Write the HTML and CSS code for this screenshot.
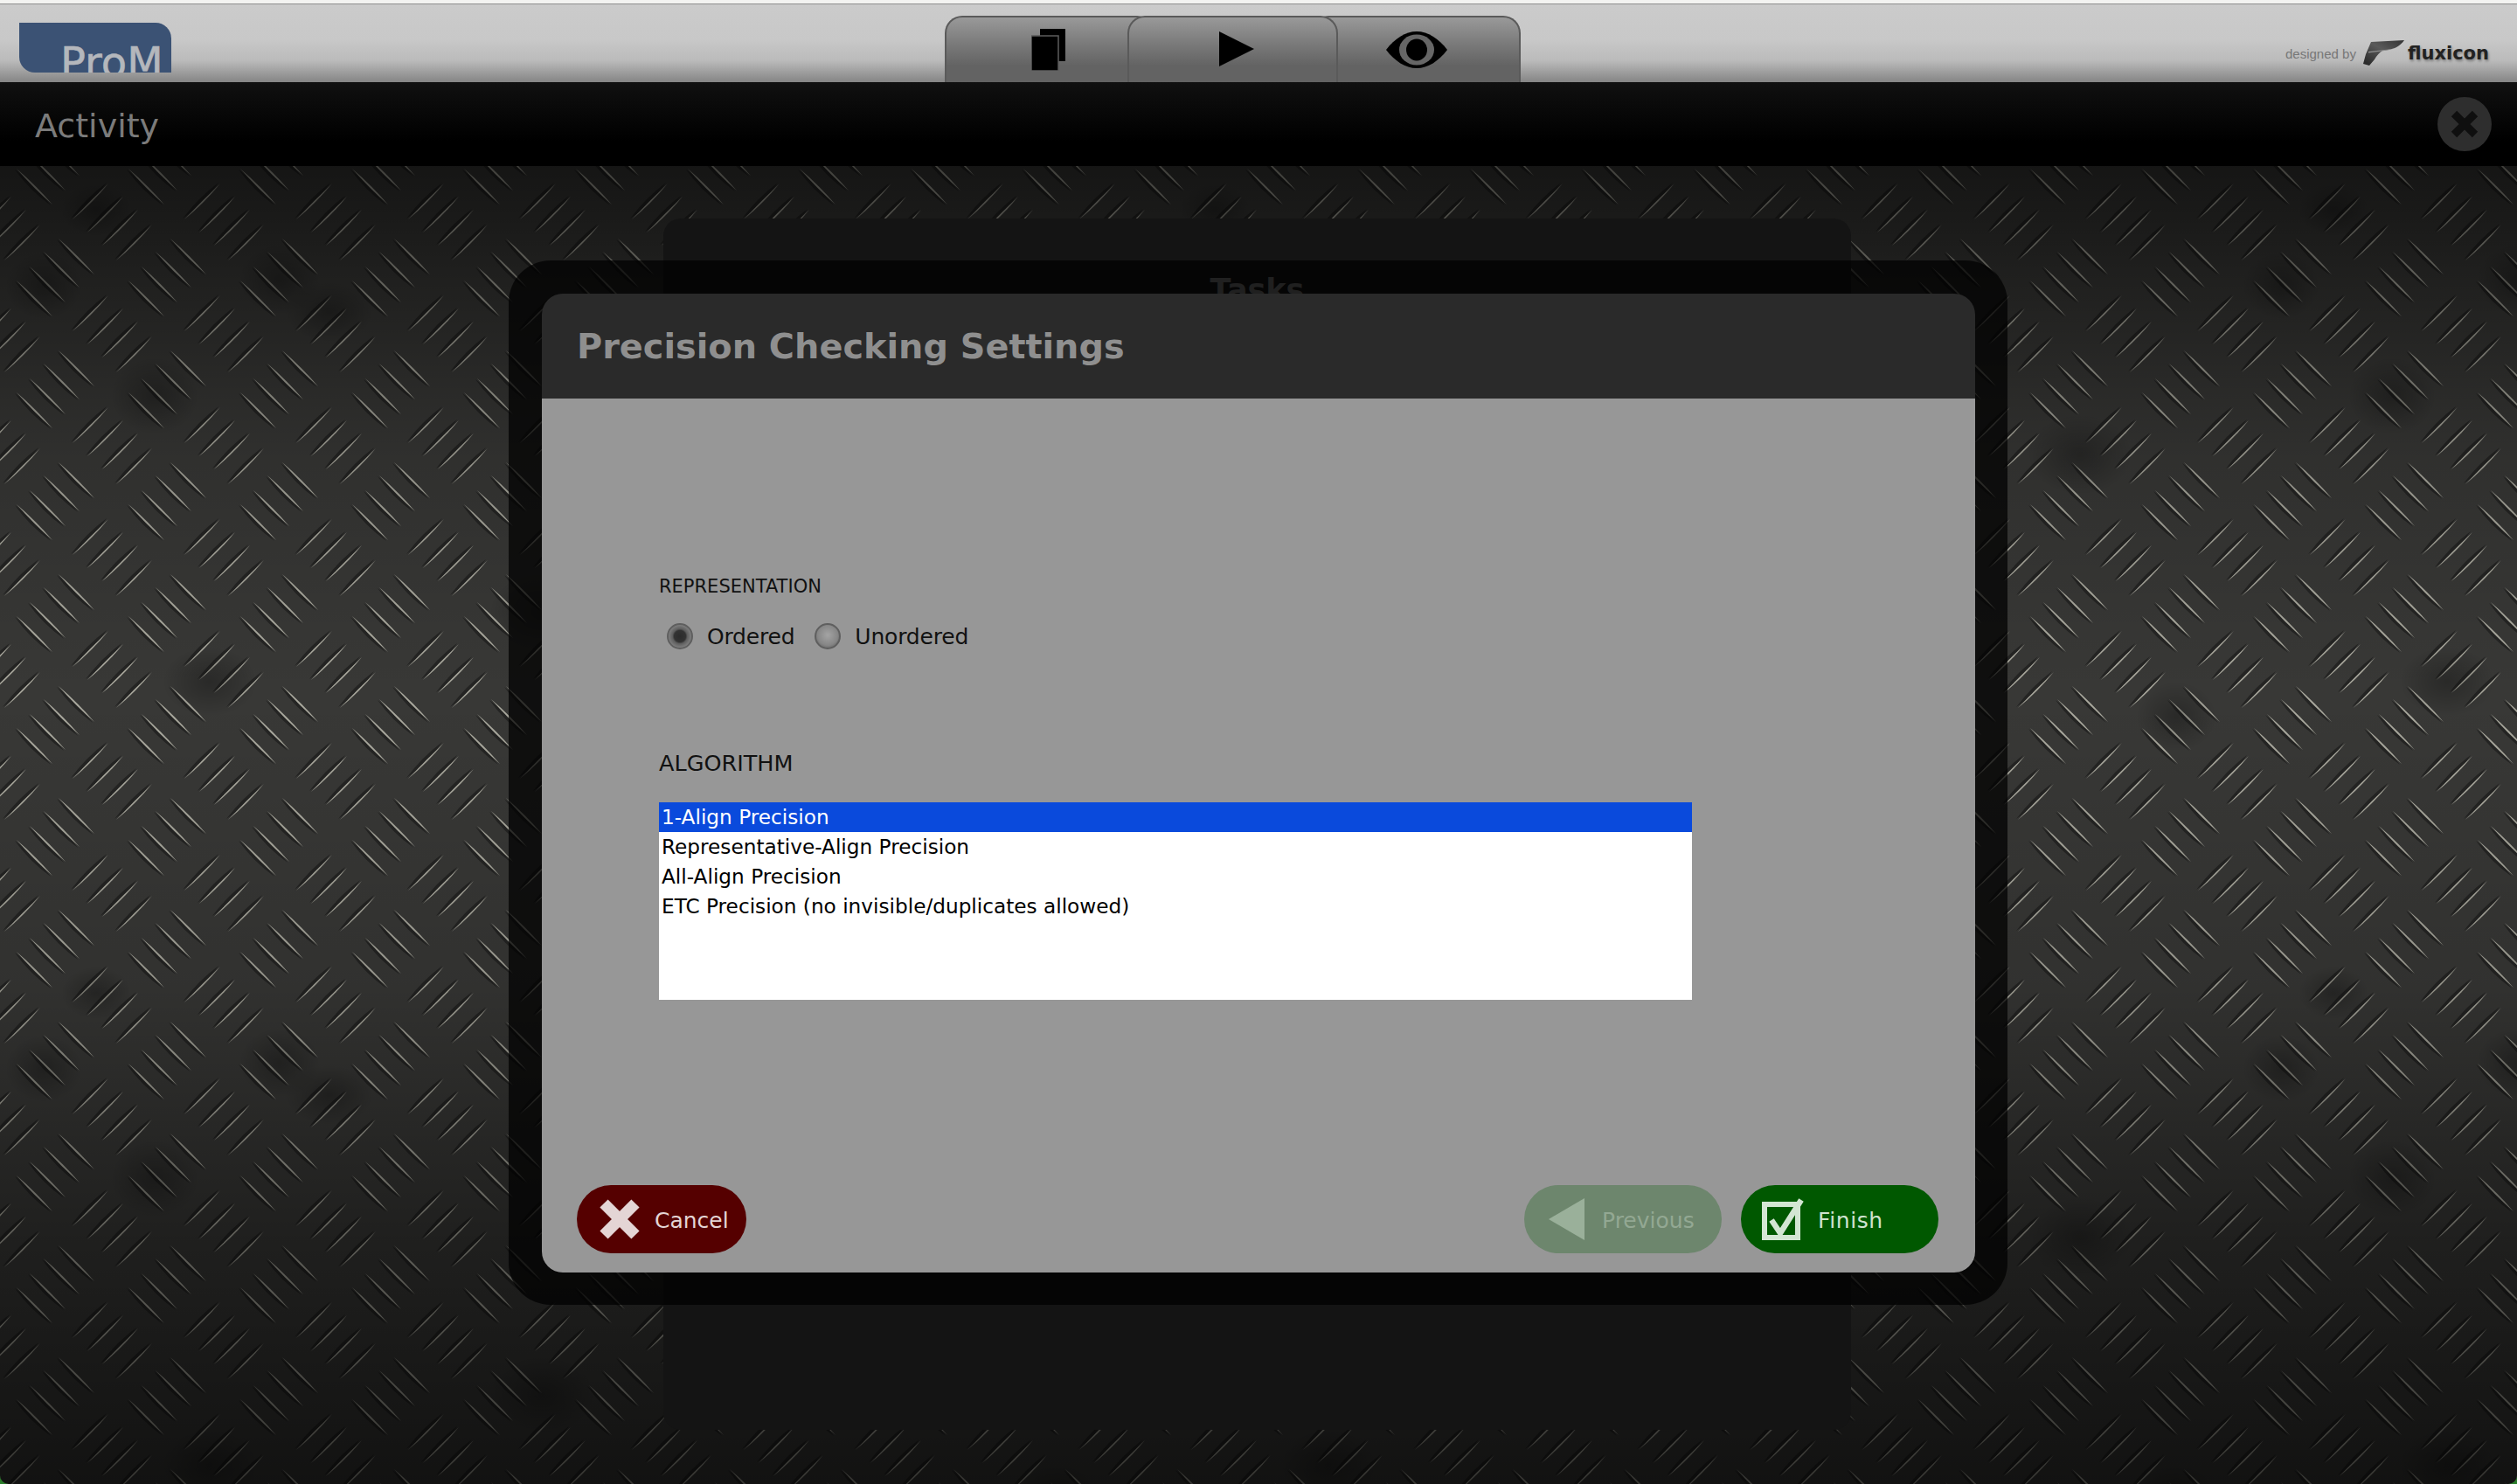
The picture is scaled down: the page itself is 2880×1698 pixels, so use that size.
FILE: index.html
```html
<!DOCTYPE html>
<html>
<head>
    <title>ProM - Precision Checking Settings</title>
    <link rel="stylesheet" href="styles.css">
</head>
<body>
    <div class="titlebar"></div>

    <div class="topbar">
        <div class="logo"><span>ProM</span></div>

        <div class="tabs">
            <div class="tab tab-left">
                <svg width="40" height="48" viewBox="0 0 40 48">
                    <rect x="10" y="0" width="29" height="37" fill="#000"/>
                    <rect x="0" y="8" width="31" height="40" fill="#000" stroke="#5c5c5c" stroke-width="1.5"/>
                </svg>
            </div>
            <div class="tab tab-middle">
                <svg width="40" height="40" viewBox="0 0 40 40">
                    <path d="M0 0 L40 20 L0 40 Z" fill="#000"/>
                </svg>
            </div>
            <div class="tab tab-right">
                <svg width="70" height="42" viewBox="0 0 70 42">
                    <path d="M0 21 C10 8 22 0 35 0 C48 0 60 8 70 21 C60 34 48 42 35 42 C22 42 10 34 0 21 Z" fill="#000"/>
                    <ellipse cx="35" cy="21" rx="20" ry="17.5" fill="#666"/>
                    <ellipse cx="35" cy="21" rx="12" ry="12.5" fill="#000"/>
                </svg>
            </div>
        </div>

        <div class="credit">
            <span class="credit-by">designed by</span>
            <svg class="credit-mark" width="48" height="30" viewBox="0 0 48 30">
                <defs>
                    <linearGradient id="mark" x1="0" y1="1" x2="1" y2="0">
                        <stop offset="0" stop-color="#222"/>
                        <stop offset="0.55" stop-color="#5a5a5a"/>
                        <stop offset="1" stop-color="#333"/>
                    </linearGradient>
                </defs>
                <path d="M9 2 L47 0 C42 7 36 10 28 11 L22 12 C19 14 15 18 13 22 L7 29 L0 27 L3 16 Z" fill="url(#mark)"/>
                <path d="M6 13 L34 10 L28 11.5 L6 14.5 Z" fill="#8e8e8e"/>
            </svg>
            <span class="credit-name">fluxicon</span>
        </div>
    </div>

    <div class="activitybar">
        <span class="activity-title">Activity</span>
        <div class="close-round">
            <svg width="36" height="36" viewBox="0 0 36 36">
                <path d="M6 6 L30 30 M30 6 L6 30" stroke="#0f0f0f" stroke-width="9"/>
            </svg>
        </div>
    </div>

    <div class="desk">
        <svg class="plate" width="2880" height="1508">
            <defs>
                <linearGradient id="lit" x1="0" y1="0" x2="1" y2="1">
                    <stop offset="0" stop-color="#5c5c56"/>
                    <stop offset="0.5" stop-color="#aaa99e"/>
                    <stop offset="1" stop-color="#5c5c56"/>
                </linearGradient>
                <linearGradient id="lit2" x1="1" y1="0" x2="0" y2="1">
                    <stop offset="0" stop-color="#5c5c56"/>
                    <stop offset="0.5" stop-color="#aaa99e"/>
                    <stop offset="1" stop-color="#5c5c56"/>
                </linearGradient>
                <radialGradient id="blot">
                    <stop offset="0" stop-color="#000" stop-opacity="0.26"/>
                    <stop offset="1" stop-color="#000" stop-opacity="0"/>
                </radialGradient>

                <g id="rise">
                    <path d="M0 41 Q18 17 41 0 Q24 26 0 41 Z" fill="#000" opacity="0.36" transform="translate(-2 -1)"/>
                    <path d="M0 41 Q20 20 41 0 Q22 23 0 41 Z" fill="url(#lit)"/>
                </g>
                <g id="fall">
                    <path d="M0 0 Q16 23 41 41 Q23 16 0 0 Z" fill="#000" opacity="0.36" transform="translate(-2 1)"/>
                    <path d="M0 0 Q20 23 41 41 Q22 19 0 0 Z" fill="url(#lit2)"/>
                </g>
                <g id="rises">
                    <use href="#rise" x="83" y="82"/>
                    <use href="#rise" x="100" y="97"/>
                    <use href="#rise" x="117" y="112"/>
                    <use href="#rise" x="133" y="129"/>
                </g>

                <pattern id="tread" width="128" height="128" patternUnits="userSpaceOnUse" patternTransform="translate(0 -190)">
                    <rect width="128" height="128" fill="#383836"/>
                    <use href="#rises"/>
                    <use href="#rises" x="-128"/>
                    <use href="#rises" y="-128"/>
                    <use href="#rises" x="-128" y="-128"/>
                    <use href="#fall" x="67" y="17"/>
                    <use href="#fall" x="50" y="32"/>
                    <use href="#fall" x="34" y="49"/>
                    <use href="#fall" x="19" y="65"/>
                </pattern>
                <pattern id="blots" width="1280" height="896" patternUnits="userSpaceOnUse" patternTransform="translate(0 -190)">
                    <ellipse cx="320" cy="320" rx="46" ry="40" fill="url(#blot)"/>
                    <ellipse cx="377" cy="357" rx="50" ry="34" fill="url(#blot)"/>
                    <ellipse cx="177" cy="453" rx="50" ry="44" fill="url(#blot)"/>
                    <ellipse cx="50" cy="327" rx="44" ry="38" fill="url(#blot)"/>
                    <ellipse cx="110" cy="240" rx="40" ry="30" fill="url(#blot)"/>
                    <ellipse cx="620" cy="700" rx="60" ry="44" fill="url(#blot)"/>
                    <ellipse cx="900" cy="140" rx="50" ry="40" fill="url(#blot)"/>
                    <ellipse cx="1100" cy="520" rx="60" ry="46" fill="url(#blot)"/>
                    <ellipse cx="1210" cy="820" rx="46" ry="40" fill="url(#blot)"/>
                    <ellipse cx="240" cy="780" rx="54" ry="40" fill="url(#blot)"/>
                </pattern>
            </defs>
            <rect width="2880" height="1508" fill="url(#tread)"/>
            <rect width="2880" height="1508" fill="url(#blots)"/>
        </svg>
        <div class="plate-shade"></div>

        <div class="panel-back"><span>Tasks</span></div>
        <div class="panel-frame"></div>

        <div class="dialog">
            <div class="dialog-head">Precision Checking Settings</div>
            <div class="dialog-body">
                <div class="form">
                    <div class="label-small">REPRESENTATION</div>
                    <div class="radios">
                        <span class="radio radio-on"></span>
                        <span class="radio-text">Ordered</span>
                        <span class="radio"></span>
                        <span class="radio-text">Unordered</span>
                    </div>
                    <div class="label-big">ALGORITHM</div>
                    <div class="listbox">
                        <div class="list-row selected">1-Align Precision</div>
                        <div class="list-row">Representative-Align Precision</div>
                        <div class="list-row">All-Align Precision</div>
                        <div class="list-row">ETC Precision (no invisible/duplicates allowed)</div>
                    </div>
                </div>
                <div class="buttons">
                    <div class="btn btn-cancel">
                        <svg width="46" height="46" viewBox="0 0 46 46">
                            <path d="M5 5 L41 41 M41 5 L5 41" stroke="#e4d5d5" stroke-width="13"/>
                        </svg>
                        <span>Cancel</span>
                    </div>
                    <div class="btn-group">
                        <div class="btn btn-previous">
                            <svg width="42" height="48" viewBox="0 0 42 48">
                                <path d="M41 0 L41 48 L0 24 Z" fill="#9ab09a"/>
                            </svg>
                            <span>Previous</span>
                        </div>
                        <div class="btn btn-finish">
                            <svg width="48" height="48" viewBox="0 0 48 48">
                                <rect x="3" y="7" width="38" height="38" fill="none" stroke="#d3e6d3" stroke-width="6"/>
                                <path d="M11 25 L21 40 L45 2" fill="none" stroke="#d3e6d3" stroke-width="6.5"/>
                            </svg>
                            <span>Finish</span>
                        </div>
                    </div>
                </div>
            </div>
        </div>
    </div>
</body>
</html>
```

FILE: styles.css
```css
html, body {
    margin: 0;
    padding: 0;
}
body {
    width: 2880px;
    height: 1698px;
    overflow: hidden;
    display: flex;
    flex-direction: column;
    font-family: "DejaVu Sans", sans-serif;
    background-color: #2a7d2a;
}
.titlebar {
    height: 4px;
    background-color: #f3f3f1;
    border-bottom: 1px solid #8e8e8e;
    flex: none;
}
.topbar {
    height: 89px;
    flex: none;
    display: flex;
    justify-content: space-between;
    background: linear-gradient(#cbcbcb, #c8c8c8 45%, #bbb 72%, #858585);
    position: relative;
}
.logo {
    width: 174px;
    height: 57px;
    margin: 21px 0 0 22px;
    background-color: #3b5274;
    border-radius: 0 18px 0 18px;
    overflow: hidden;
    box-sizing: border-box;
    padding: 21px 0 0 47px;
}
.logo span {
    display: block;
    font-size: 48px;
    line-height: 48px;
    color: #b4b7bc;
    white-space: nowrap;
    -webkit-text-stroke: 0.6px #b4b7bc;
}
.tabs {
    display: flex;
    position: absolute;
    left: 1081px;
    top: 13px;
    height: 76px;
}
.tab {
    box-sizing: border-box;
    height: 76px;
    background: linear-gradient(#999, #777 45%, #636363 75%, #636363);
    border: 2px solid #5a5a5a;
    border-bottom: none;
    border-radius: 20px 20px 0 0;
    display: flex;
    justify-content: center;
}
.tab-left {
    width: 240px;
    padding: 13px 0 0 0;
    margin-right: -31px;
}
.tab-left svg {
    margin-left: -3px;
}
.tab-middle {
    width: 241px;
    padding: 16px 0 0 8px;
    position: relative;
}
.tab-right {
    width: 240px;
    margin-left: -31px;
    padding: 16px 0 0 2px;
}
.credit {
    display: flex;
    align-items: center;
    height: 30px;
    margin: 41px 32px 0 0;
}
.credit-by {
    font-family: "Liberation Sans", sans-serif;
    font-size: 15px;
    color: #777;
    margin-right: 8px;
}
.credit-mark {
    margin-right: 3px;
}
.credit-name {
    font-weight: bold;
    font-size: 21px;
    color: #222;
    text-shadow: 1px 2px 3px rgba(0, 0, 0, 0.35);
}
.activitybar {
    height: 96px;
    flex: none;
    display: flex;
    justify-content: space-between;
    align-items: center;
    background: linear-gradient(#101010, #000 70%);
    padding: 0 29px 0 40px;
}
.activity-title {
    font-size: 38px;
    color: #7b7b7b;
    padding-top: 3px;
}
.close-round {
    width: 62px;
    height: 62px;
    border-radius: 50%;
    background-color: #2e2e2e;
    display: flex;
    align-items: center;
    justify-content: center;
}
.desk {
    flex: 1;
    position: relative;
    overflow: hidden;
    border-radius: 0 0 10px 10px;
}
.plate {
    position: absolute;
    left: 0;
    top: 0;
}
.plate-shade {
    position: absolute;
    left: 0;
    top: 0;
    right: 0;
    bottom: 0;
    background: linear-gradient(rgba(0, 0, 0, 0.62), rgba(0, 0, 0, 0.15) 22%, rgba(0, 0, 0, 0) 40%, rgba(0, 0, 0, 0.12) 62%, rgba(0, 0, 0, 0.45) 82%, rgba(0, 0, 0, 0.68));
}
.panel-back {
    position: absolute;
    left: 759px;
    top: 60px;
    width: 1359px;
    height: 1386px;
    background-color: #141414;
    border-radius: 20px;
    overflow: hidden;
    text-align: center;
}
.panel-back span {
    display: block;
    margin-top: 62px;
    font-size: 35px;
    font-weight: bold;
    color: #757575;
}
.panel-frame {
    position: absolute;
    left: 582px;
    top: 108px;
    width: 1715px;
    height: 1195px;
    background-color: rgba(0, 0, 0, 0.72);
    border-radius: 48px;
}
.dialog {
    position: absolute;
    left: 620px;
    top: 146px;
    width: 1640px;
    height: 1120px;
    border-radius: 24px;
    overflow: hidden;
    display: flex;
    flex-direction: column;
}
.dialog-head {
    height: 120px;
    flex: none;
    background-color: #2a2a2a;
    color: #8f8f8f;
    font-size: 39.8px;
    font-weight: bold;
    line-height: 120px;
    padding-left: 40px;
    white-space: nowrap;
}
.dialog-body {
    flex: 1;
    background-color: #979797;
    display: flex;
    flex-direction: column;
    justify-content: space-between;
}
.form {
    padding: 202px 0 0 134px;
    color: #000;
}
.label-small {
    font-size: 21px;
    line-height: 26px;
    color: #111;
}
.radios {
    display: flex;
    align-items: center;
    margin: 29px 0 0 9px;
    height: 30px;
}
.radio {
    width: 30px;
    height: 30px;
    border-radius: 50%;
    box-sizing: border-box;
    border: 2px solid #5f5f5f;
    background: radial-gradient(circle at 50% 45%, #a4a4a4, #868686 60%, #505050);
    flex: none;
}
.radio-on {
    background: radial-gradient(circle at 50% 50%, #2c2c2c 0, #333 36%, #5e5e5e 46%, #808080 72%, #505050);
}
.radio-text {
    font-size: 25px;
    letter-spacing: -0.2px;
    color: #111;
    margin: 0 23px 0 16px;
}
.label-big {
    font-size: 25.5px;
    line-height: 32px;
    margin-top: 114px;
    color: #111;
}
.listbox {
    margin-top: 29px;
    width: 1182px;
    height: 226px;
    background-color: #fff;
}
.list-row {
    height: 34px;
    line-height: 34px;
    font-size: 23.2px;
    padding-left: 3px;
    color: #000;
    white-space: nowrap;
}
.list-row.selected {
    background-color: #0a4adc;
    color: #fff;
}
.buttons {
    display: flex;
    justify-content: space-between;
    padding: 0 42px 22px 40px;
}
.btn-group {
    display: flex;
    gap: 22px;
}
.btn {
    height: 78px;
    border-radius: 39px;
    display: flex;
    align-items: center;
    font-size: 25px;
    box-sizing: border-box;
}
.btn span {
    padding-top: 2px;
}
.btn-cancel {
    width: 194px;
    background-color: #550000;
    color: #e4d5d5;
    padding-left: 26px;
    gap: 17px;
}
.btn-previous {
    width: 226px;
    background-color: #6d866d;
    color: #93a893;
    padding-left: 28px;
    gap: 19px;
}
.btn-finish {
    width: 226px;
    background-color: #005800;
    color: #cfe2cf;
    padding-left: 24px;
    gap: 16px;
    letter-spacing: 0.6px;
}
```
